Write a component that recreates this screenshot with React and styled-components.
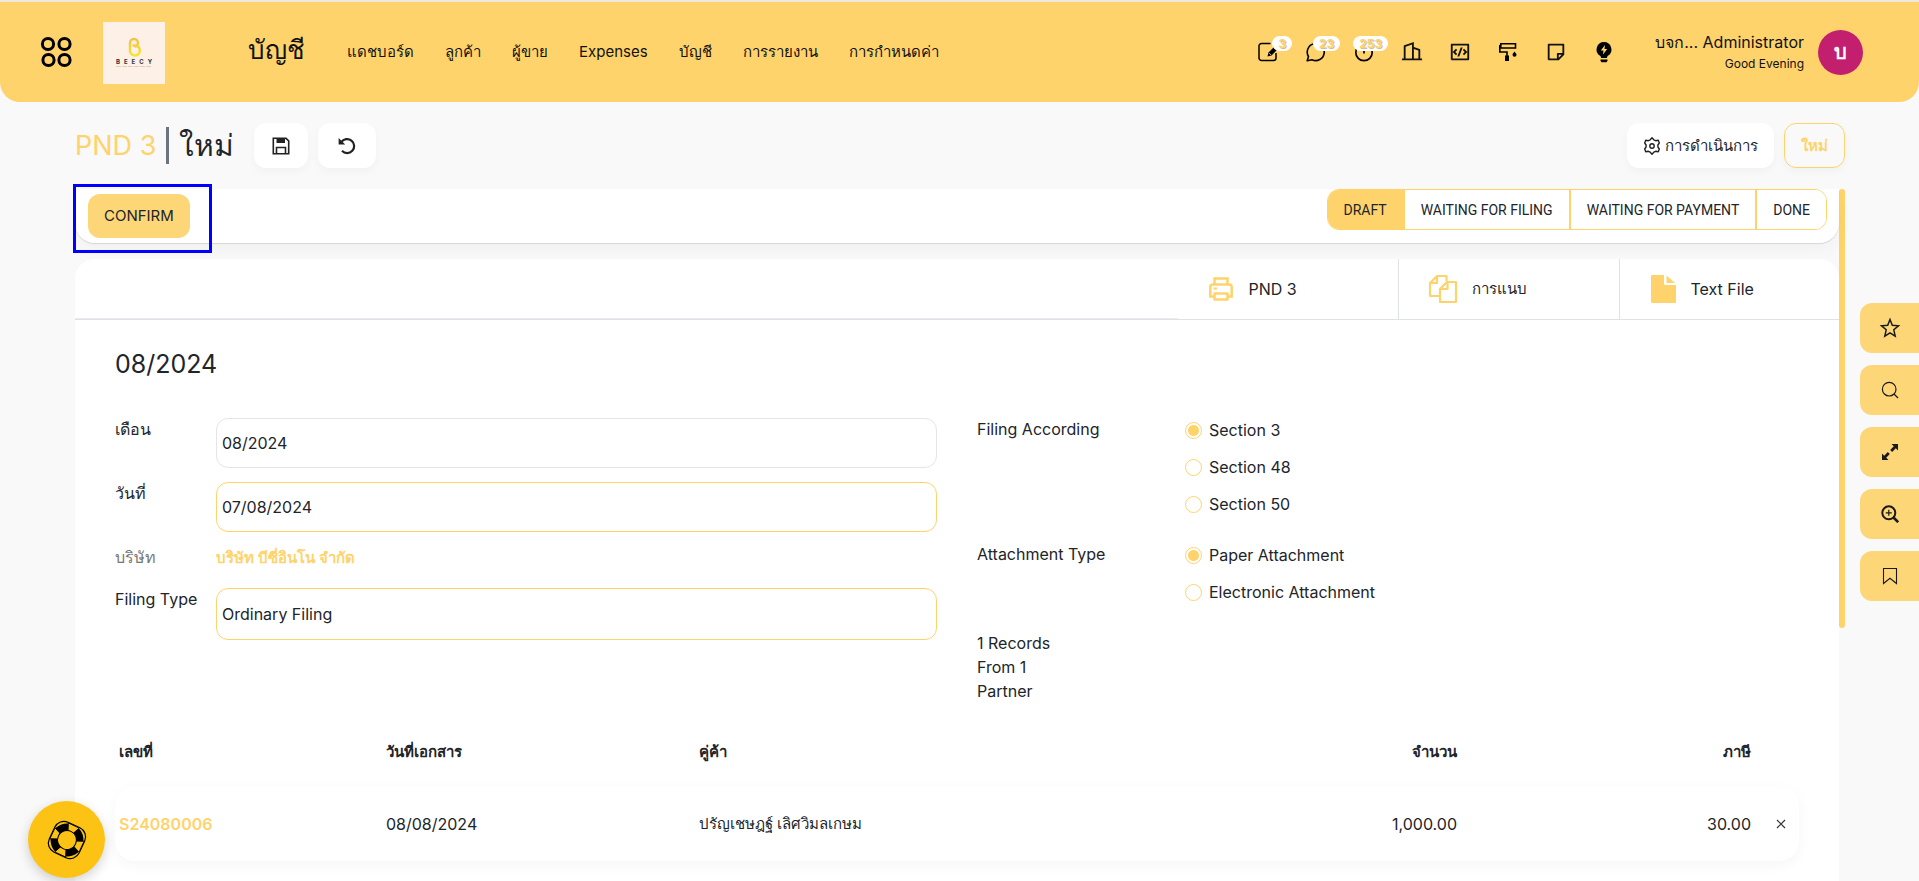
import React, { useState } from 'react'
import styled, { createGlobalStyle, css } from 'styled-components'
import { RiBuilding2Line, RiCodeBoxLine, RiStickyNoteLine } from 'react-icons/ri'

const yellow = '#ffd36b'
const softYellow = '#fdd678'

const GlobalStyle = createGlobalStyle`
  * {
    box-sizing: border-box;
  }

  body {
    margin: 0;
    background: #f9f9f9;
    color: #212529;
    font-family: Inter, 'Noto Sans', sans-serif;
    font-size: 16px;
    font-weight: 400;
    line-height: 24px;
  }

  button, input, select {
    font: inherit;
    color: inherit;
  }

  button {
    cursor: pointer;
    border: 0;
    padding: 0;
  }

  a {
    color: inherit;
    text-decoration: none;
  }
`

const Page = styled.div`
  display: flex;
  flex-direction: column;
  height: 100vh;
  overflow: hidden;
`

const Header = styled.header`
  flex: none;
  display: flex;
  align-items: center;
  height: 102px;
  padding: 0 56px 0 40px;
  border-top: 2px solid #f1e9d8;
  border-radius: 0 0 20px 20px;
  background: ${yellow};
  color: #111;
`

const AppsButton = styled.button`
  display: flex;
  background: none;
`

const Logo = styled.a`
  display: flex;
  margin-left: 31px;
  padding-top: 2px;
`

const AppName = styled.a`
  margin-left: 83px;
  padding-bottom: 4px;
  font-size: 26px;
  line-height: 40px;
`

const Nav = styled.nav`
  display: flex;
  gap: 31px;
  margin-left: 42px;
  font-size: 15px;
`

const Tray = styled.div`
  display: flex;
  align-items: center;
  gap: 20px;
  margin-left: auto;
`

const TrayButton = styled.button`
  position: relative;
  display: flex;
  justify-content: center;
  width: 28px;
  background: none;
`

const Badge = styled.span`
  position: absolute;
  top: -6px;
  right: -10px;
  padding: 0 6px;
  border-radius: 8px;
  background: white;
  color: ${yellow};
  font-size: 12px;
  font-weight: 700;
  line-height: 15px;
  text-shadow: 1px 1px 0 #c9bfa8;
`

const User = styled.div`
  display: flex;
  align-items: center;
  gap: 14px;
  margin-left: 37px;
  text-align: right;
`

const UserName = styled.div`
  font-size: 16px;
`

const Greeting = styled.div`
  font-size: 12px;
  line-height: 20px;
`

const Avatar = styled.div`
  width: 45px;
  height: 45px;
  border-radius: 50%;
  background: #c2206f;
  color: white;
  font-size: 20px;
  font-weight: 600;
  line-height: 45px;
  text-align: center;
`

const ControlPanel = styled.div`
  flex: none;
  display: flex;
  align-items: center;
  gap: 10px;
  margin: 21px 74px 21px 75px;
`

const Breadcrumb = styled.h1`
  display: flex;
  align-items: center;
  gap: 10px;
  margin: 0 10px 0 0;
  font-size: 27px;
  font-weight: 400;
  line-height: 37px;

  a{
    color: ${yellow};
  }

  span{
    padding-left: 10px;
    border-left: 3px solid #6c757d;
    font-size: 30px;
  }
`

const ToolButton = styled.button`
  display: flex;
  align-items: center;
  justify-content: center;
  gap: 4px;
  height: 45px;
  padding: 0 ${props => props.$pad || '16px'};
  border-radius: 12px;
  background: white;
  box-shadow: 0 4px 8px rgba(0, 0, 0, 0.03);
  font-size: 15px;

  ${props => props.$outline && css`
    border: 1px solid ${yellow};
    background: transparent;
    color: ${yellow};
    font-weight: 600;
  `}
`

const Spacer = styled.div`
  flex: 1;
`

const Scroller = styled.div`
  flex: 1;
  display: flex;
  min-height: 0;
  margin: 0 74px 0 75px;
`

const Content = styled.main`
  flex: 1;
  min-width: 0;
`

const ScrollTrack = styled.div`
  width: 6px;
`

const ScrollThumb = styled.div`
  height: calc(64% - 4px);
  border-radius: 3px;
  background: ${yellow};
`

const StatusRow = styled.div`
  position: relative;
  display: flex;
  justify-content: space-between;
  align-items: flex-start;
  height: 54px;
  padding: 0 12px 0 13px;
  border-radius: 0 0 20px 20px;
  background: white;
  box-shadow: 0 1px 1px rgba(0, 0, 0, 0.12), 0 8px 16px rgba(0, 0, 0, 0.03);
`

const ConfirmButton = styled.button`
  height: 44px;
  margin-top: 5px;
  padding: 0 16px;
  border-radius: 12px;
  background: ${softYellow};
  font-size: 15px;
`

const Highlight = styled.div`
  position: absolute;
  top: -5px;
  left: -2px;
  width: 139px;
  height: 69px;
  border: 3px solid #0000ff;
  pointer-events: none;
`

const StatusBar = styled.div`
  display: flex;
  overflow: hidden;
  border: 1px solid ${yellow};
  border-radius: 12px;
`

const Status = styled.button`
  height: 39px;
  padding: 0 16px;
  border-left: 2px solid ${yellow};
  background: ${props => props.$active ? yellow : 'white'};
  font-family: Roboto, sans-serif;
  font-size: 14px;

  &:first-child{
    border-left: 0;
  }
`

const Sheet = styled.section`
  margin-top: 16px;
  padding-bottom: 40px;
  border-radius: 20px 20px 0 0;
  background: white;
`

const ButtonBox = styled.div`
  display: grid;
  grid-template-columns: 5fr 1fr 1fr 1fr;
  height: 61px;
  border-bottom: 1px solid #dee2e6;

  &:before{
    content: '';
    border-bottom: 1px solid #e9ebee;
  }
`

const StatButton = styled.button`
  display: flex;
  align-items: center;
  gap: 14px;
  padding-left: 29px;
  border-left: ${props => props.$first ? '0' : '1px solid #dee2e6'};
  background: none;
  font-size: ${props => props.$thai ? '15px' : '16px'};
`

const SheetBody = styled.div`
  padding: 0 40px;
`

const SheetTitle = styled.h2`
  margin: 29px 0 39px;
  font-size: 25px;
  font-weight: 400;
  line-height: 30px;
`

const Groups = styled.div`
  display: grid;
  grid-template-columns: 1fr 1fr;
  gap: 40px;
`

const FieldRow = styled.div`
  display: grid;
  grid-template-columns: 101px 1fr;
  align-items: start;
  min-height: 28px;
  margin-bottom: 14px;
`

const Label = styled.label`
  color: ${props => props.$muted ? '#777' : 'inherit'};
  line-height: 22px;
  white-space: nowrap;
`

const boxed = css`
  width: 100%;
  height: 50px;
  padding: 0 5px;
  border: 1px solid ${props => props.$plain ? '#e4e4ec' : yellow};
  border-radius: 12px;
  background: white;
  outline: 0;
`

const Field = styled.input`
  ${boxed}
`

const Select = styled.select`
  ${boxed}
  height: 52px;
  appearance: none;
`

const CompanyLink = styled.a`
  color: ${yellow};
  font-size: 15px;
  font-weight: 600;
`

const RadioField = styled.fieldset`
  display: grid;
  grid-template-columns: 208px 1fr;
  margin: 0 0 27px;
  padding: 0;
  border: 0;
`

const Legend = styled.legend`
  float: left;
  padding: 0;
  line-height: 22px;
`

const Options = styled.div`
  display: flex;
  flex-direction: column;
  gap: 13px;
`

const Option = styled.label`
  display: flex;
  align-items: center;
  gap: 7px;
`

const Radio = styled.input`
  appearance: none;
  width: 17px;
  height: 17px;
  margin: 0;
  border: 1px solid ${yellow};
  border-radius: 50%;
  background: white;

  &:checked{
    background: radial-gradient(circle, ${yellow} 5px, white 6px);
  }
`

const Summary = styled.p`
  width: 85px;
  margin: 0;
`

const Table = styled.table`
  width: 100%;
  margin-top: 14px;
  border-collapse: separate;
  border-spacing: 0;
  table-layout: fixed;

  th, td{
    padding: 0 4px;
    text-align: left;
  }

  th{
    height: 69px;
    font-size: 15px;
    font-weight: 600;
  }

  td{
    height: 75px;
  }

  td.thai{
    font-size: 15px;
  }

  tbody tr{
    border-radius: 20px;
    box-shadow: 0 4px 14px rgba(0, 0, 0, 0.04);
  }

  th.number, td.number{
    text-align: right;
  }
`

const RecordLink = styled.a`
  color: ${yellow};
  font-weight: 600;
`

const RemoveButton = styled.button`
  display: flex;
  margin-left: 17px;
  background: none;
`

const SideButtons = styled.div`
  position: fixed;
  top: 303px;
  right: 0;
  display: flex;
  flex-direction: column;
  gap: 12px;
`

const SideButton = styled.button`
  display: flex;
  align-items: center;
  justify-content: center;
  width: 59px;
  height: 50px;
  border-radius: 12px 0 0 12px;
  background: ${softYellow};
`

const SupportButton = styled.button`
  position: fixed;
  left: 28px;
  bottom: 3px;
  display: flex;
  align-items: center;
  justify-content: center;
  width: 77px;
  height: 77px;
  border-radius: 50%;
  background: #fcc314;
  box-shadow: 0 4px 12px rgba(0, 0, 0, 0.18);
`

const AppsIcon = () => (
  <svg width="32" height="32" viewBox="0 0 32 32" fill="none" stroke="#000" strokeWidth="3">
    <circle cx="8" cy="8" r="5.6" />
    <circle cx="24.5" cy="8" r="5.6" />
    <circle cx="8.5" cy="24" r="5.6" />
    <circle cx="24.5" cy="24" r="5.6" />
  </svg>
)

const LogoIcon = () => (
  <svg width="62" height="62" viewBox="0 0 62 62">
    <defs>
      <linearGradient id="bee" x1="0" y1="0" x2="0" y2="1">
        <stop offset="0" stopColor="#f2c14b" />
        <stop offset="1" stopColor="#f5e52f" />
      </linearGradient>
    </defs>
    <rect width="62" height="62" fill="#fdf1e7" />
    <path d="M27 23.500v-2.500a4 4 0 0 1 8 0c0 1.600-.8 2.800-2.500 3.500M27 21.500v6a5 5 0 1 0 5-4h-1.500" fill="none" stroke="url(#bee)" strokeWidth="2.500" strokeLinecap="round" />
    <text x="33" y="42" fontSize="6" fontWeight="700" fontFamily="Inter" letterSpacing="4" fill="#333" textAnchor="middle">BEECY</text>
    <path d="M13 44.500h36" stroke="#e0cdbb" strokeWidth="1.200" strokeDasharray="5 1" />
  </svg>
)

const EditIcon = () => (
  <svg width="20" height="20" viewBox="0 0 20 20" fill="none" stroke="#000" strokeWidth="1.500">
    <path d="M12.500 1.500h-9A2.500 2.500 0 0 0 1 4v12a2.500 2.500 0 0 0 2.500 2.500h12A2.500 2.500 0 0 0 18 16v-5" />
    <path d="M9.500 14.500l1-4 7-7 3 3-7 7z" fill="#000" stroke="none" />
    <path d="M11.300 11.200l1.700 1.700" stroke={yellow} strokeWidth="1" />
  </svg>
)

const ChatIcon = () => (
  <svg width="20" height="20" viewBox="0 0 20 20" fill="none" stroke="#000" strokeWidth="1.600">
    <path d="M1.200 18.800L2.500 14.500A8.500 8.500 0 1 1 6 17.700z" strokeLinejoin="round" />
  </svg>
)

const ClockIcon = () => (
  <svg width="20" height="20" viewBox="0 0 20 20" fill="none" stroke="#000" strokeWidth="1.700">
    <circle cx="10" cy="10.500" r="8.200" />
    <path d="M10 6v5.500" />
  </svg>
)

const PaintIcon = () => (
  <svg width="20" height="20" viewBox="0 0 20 20" fill="none" stroke="#000" strokeWidth="1.600">
    <path d="M2.800 1.800h14.700v4.200H2.800z" />
    <path d="M1 3.800h2M1.800 4v6h7.200v4" />
    <path d="M7 13.500h4V19H7z" fill="#000" stroke="none" />
    <path d="M16.500 9.500c1.500 1.800 2 2.600 2 3.300a2 2 0 0 1-4 0c0-.7.500-1.500 2-3.300z" fill="#000" stroke="none" />
  </svg>
)

const BulbIcon = () => (
  <svg width="20" height="22" viewBox="0 0 20 22">
    <path d="M10 1a7.500 7.500 0 0 0-4 13.800c.6.400 1 1.200 1 2.200h6c0-1 .4-1.800 1-2.200A7.500 7.500 0 0 0 10 1z" />
    <path d="M6.500 18.500h7v1.200l-1 1.500h-5l-1-1.500z" />
    <path d="M11 4L6.800 9.500h2.700L9 13.500 13.200 8h-2.700z" fill={yellow} />
  </svg>
)

const SaveIcon = () => (
  <svg width="18" height="18" viewBox="0 0 18 18" fill="none" stroke="#222" strokeWidth="1.600">
    <path d="M1.300 1.300H14l2.700 2.600v12.800H1.300z" />
    <path d="M4.500 16.500v-6h9v6" />
    <path d="M4.500 1.500h8.500v4.500H4.500z" fill="#222" stroke="none" />
  </svg>
)

const UndoIcon = () => (
  <svg width="18" height="18" viewBox="0 0 18 18" fill="none" stroke="#222" strokeWidth="2.200">
    <path d="M3.300 5.200A7 7 0 1 1 4 13.800" />
    <path d="M.6 1v6.600h6.600z" fill="#222" stroke="none" />
  </svg>
)

const GearIcon = () => (
  <svg width="18" height="22" viewBox="0 0 18 22" fill="none" stroke="#222" strokeWidth="1.400" strokeLinejoin="round">
    <path d="M7.200 4.800L9 2.800l1.800 2 1.800.9 2.700-.4 1 2.700-1.400 2v2l1.400 2-1 2.700-2.700-.4-1.800.9-1.800 2-1.800-2-1.800-.9-2.700.4-1-2.700 1.400-2v-2L1.700 8l1-2.700 2.700.4z" />
    <circle cx="9" cy="11" r="2.200" />
  </svg>
)

const PrinterIcon = () => (
  <svg width="28" height="28" viewBox="0 0 28 28" fill="none" stroke={yellow} strokeWidth="2.500">
    <path d="M7.500 9V3.500h13V9M7.500 21.500H3.300V12a2.500 2.500 0 0 1 2.500-2.500h16.400a2.500 2.500 0 0 1 2.500 2.500v9.500h-4.200" />
    <path d="M7.500 18.500h13v6h-13z" strokeLinejoin="round" />
    <path d="M6.500 13.500h3.500" strokeWidth="2" />
  </svg>
)

const CopyIcon = () => (
  <svg width="30" height="30" viewBox="0 0 30 30" fill="none" stroke={yellow} strokeWidth="2.200" strokeLinejoin="round">
    <path d="M18.500 7V2H9L2 9v13h9.500" />
    <path d="M9 2.500V9H2.500" />
    <path d="M19 8h9v20H12V15z" />
    <path d="M19.500 8.500V15h-7" />
  </svg>
)

const FileIcon = () => (
  <svg width="28" height="28" viewBox="0 0 28 28" fill={yellow}>
    <path d="M3 0h12v8.500a1.500 1.500 0 0 0 1.500 1.500H27v17a1 1 0 0 1-1 1H3a1 1 0 0 1-1-1V1a1 1 0 0 1 1-1z" />
    <path d="M17.500 0.500l8.500 7.500h-8.500z" />
  </svg>
)

const StarIcon = () => (
  <svg width="22" height="22" viewBox="0 0 22 22" fill="none" stroke="#1a1a1a" strokeWidth="1.500">
    <path d="M11 2.500l2.300 5.800 6.200.5-4.700 4 1.400 6.400L11 15.800l-5.200 3.400 1.400-6.400-4.700-4 6.200-.5z" />
  </svg>
)

const SearchIcon = () => (
  <svg width="18" height="18" viewBox="0 0 18 18" fill="none" stroke="#1a1a1a" strokeWidth="1.200">
    <circle cx="8.200" cy="8.200" r="6.800" />
    <path d="M13 13l4 4" />
  </svg>
)

const ExpandIcon = () => (
  <svg width="18" height="18" viewBox="0 0 18 18" fill="#1a1a1a">
    <path d="M10.500 1H17v6.500l-2.200-2.200-3.600 3.600-2-2 3.600-3.600zM7.500 17H1v-6.500l2.200 2.200 3.600-3.600 2 2-3.600 3.600z" />
  </svg>
)

const ZoomIcon = () => (
  <svg width="18" height="18" viewBox="0 0 18 18" fill="none" stroke="#1a1a1a" strokeWidth="2">
    <circle cx="7.800" cy="7.800" r="6.500" />
    <path d="M12.500 12.500l4.700 4.700" strokeWidth="2.600" />
    <path d="M4.800 7.800h6M7.800 4.800v6" strokeWidth="1.200" />
  </svg>
)

const BookmarkIcon = () => (
  <svg width="16" height="18" viewBox="0 0 16 18" fill="none" stroke="#1a1a1a" strokeWidth="1.100">
    <path d="M1.500 1.500h13v15L8 11.200l-6.500 5.300z" />
  </svg>
)

const LifebuoyIcon = () => (
  <svg width="44" height="44" viewBox="-22 -22 44 44">
    <g transform="rotate(25)" stroke="#000" fill="none">
      <rect x="-16.500" y="-16.500" width="33" height="33" rx="10" strokeWidth="1.200" />
      <circle r="16.500" fill="#000" stroke="none" />
      <path d="M-6 -16L-3 -9h6l3-7zM-6 16L-3 9h6l3 7zM-16 -6L-9 -3v6l-7 3zM16 -6L9 -3v6l7 3z" fill="#fcc314" strokeWidth="0.800" />
      <circle r="9.500" fill="#fcc314" strokeWidth="1" />
    </g>
  </svg>
)

const CloseIcon = () => (
  <svg width="10" height="10" viewBox="0 0 10 10" stroke="#333" strokeWidth="1.200">
    <path d="M1 1l8 8M9 1L1 9" />
  </svg>
)

const menu = ['แดชบอร์ด', 'ลูกค้า', 'ผู้ขาย', 'Expenses', 'บัญชี', 'การรายงาน', 'การกำหนดค่า']
const statuses = ['DRAFT', 'WAITING FOR FILING', 'WAITING FOR PAYMENT', 'DONE']

const tray = [
  { name: 'Notes', icon: <EditIcon />, count: 3 },
  { name: 'Messages', icon: <ChatIcon />, count: 23 },
  { name: 'Activities', icon: <ClockIcon />, count: 253 },
  { name: 'Company', icon: <RiBuilding2Line size={22} /> },
  { name: 'Developer', icon: <RiCodeBoxLine size={22} /> },
  { name: 'Theme', icon: <PaintIcon /> },
  { name: 'Sticky notes', icon: <RiStickyNoteLine size={22} /> },
  { name: 'Dark mode', icon: <BulbIcon /> },
]

const sideButtons = [
  { name: 'Favourite', icon: <StarIcon /> },
  { name: 'Search', icon: <SearchIcon /> },
  { name: 'Full screen', icon: <ExpandIcon /> },
  { name: 'Zoom', icon: <ZoomIcon /> },
  { name: 'Bookmark', icon: <BookmarkIcon /> },
]

const rows = [
  { no: 'S24080006', date: '08/08/2024', partner: 'ปรัญเชษฎฐ์ เลิศวิมลเกษม', amount: '1,000.00', tax: '30.00' },
]

function RadioGroup({ label, name, options }) {
  const [value, setValue] = useState(options[0])
  return (
    <RadioField>
      <Legend>{label}</Legend>
      <Options>
        {options.map(option => (
          <Option key={option}>
            <Radio type="radio" name={name} checked={value === option} onChange={() => setValue(option)} />
            {option}
          </Option>
        ))}
      </Options>
    </RadioField>
  )
}

function TopBar() {
  return (
    <Header>
      <AppsButton aria-label="Apps"><AppsIcon /></AppsButton>
      <Logo href="#" aria-label="Beecy"><LogoIcon /></Logo>
      <AppName href="#">บัญชี</AppName>
      <Nav>
        {menu.map(item => (
          <a key={item} href="#">{item}</a>
        ))}
      </Nav>
      <Tray>
        {tray.map(item => (
          <TrayButton key={item.name} aria-label={item.name}>
            {item.icon}
            {item.count && <Badge>{item.count}</Badge>}
          </TrayButton>
        ))}
      </Tray>
      <User>
        <div>
          <UserName>บจก... Administrator</UserName>
          <Greeting>Good Evening</Greeting>
        </div>
        <Avatar>บ</Avatar>
      </User>
    </Header>
  )
}

function App() {
  const [month, setMonth] = useState('08/2024')
  const [date, setDate] = useState('07/08/2024')

  return (
    <Page>
      <GlobalStyle />
      <TopBar />
      <ControlPanel>
        <Breadcrumb>
          <a href="#">PND 3</a>
          <span>ใหม่</span>
        </Breadcrumb>
        <ToolButton $pad="18px" aria-label="Save"><SaveIcon /></ToolButton>
        <ToolButton $pad="20px" aria-label="Discard"><UndoIcon /></ToolButton>
        <Spacer />
        <ToolButton><GearIcon />การดำเนินการ</ToolButton>
        <ToolButton $outline>ใหม่</ToolButton>
      </ControlPanel>
      <Scroller>
        <Content>
          <StatusRow>
            <ConfirmButton>CONFIRM</ConfirmButton>
            <StatusBar>
              {statuses.map((status, index) => (
                <Status key={status} $active={index === 0}>{status}</Status>
              ))}
            </StatusBar>
            <Highlight />
          </StatusRow>
          <Sheet>
            <ButtonBox>
              <StatButton $first><PrinterIcon />PND 3</StatButton>
              <StatButton $thai><CopyIcon />การแนบ</StatButton>
              <StatButton><FileIcon />Text File</StatButton>
            </ButtonBox>
            <SheetBody>
              <SheetTitle>08/2024</SheetTitle>
              <Groups>
                <div>
                  <FieldRow>
                    <Label htmlFor="month">เดือน</Label>
                    <Field id="month" $plain value={month} onChange={e => setMonth(e.target.value)} />
                  </FieldRow>
                  <FieldRow>
                    <Label htmlFor="date">วันที่</Label>
                    <Field id="date" value={date} onChange={e => setDate(e.target.value)} />
                  </FieldRow>
                  <FieldRow>
                    <Label as="span" $muted>บริษัท</Label>
                    <CompanyLink href="#">บริษัท บีซี่อินโน จำกัด</CompanyLink>
                  </FieldRow>
                  <FieldRow>
                    <Label htmlFor="type">Filing Type</Label>
                    <Select id="type">
                      <option>Ordinary Filing</option>
                      <option>Additional Filing</option>
                    </Select>
                  </FieldRow>
                </div>
                <div>
                  <RadioGroup label="Filing According" name="section" options={['Section 3', 'Section 48', 'Section 50']} />
                  <RadioGroup label="Attachment Type" name="attachment" options={['Paper Attachment', 'Electronic Attachment']} />
                  <Summary>1 Records From 1 Partner</Summary>
                </div>
              </Groups>
              <Table>
                <colgroup>
                  <col width="267" />
                  <col width="313" />
                  <col />
                  <col width="300" />
                  <col width="294" />
                  <col width="44" />
                </colgroup>
                <thead>
                  <tr>
                    <th>เลขที่</th>
                    <th>วันที่เอกสาร</th>
                    <th>คู่ค้า</th>
                    <th className="number">จำนวน</th>
                    <th className="number">ภาษี</th>
                    <th></th>
                  </tr>
                </thead>
                <tbody>
                  {rows.map(row => (
                    <tr key={row.no}>
                      <td><RecordLink href="#">{row.no}</RecordLink></td>
                      <td>{row.date}</td>
                      <td className="thai">{row.partner}</td>
                      <td className="number">{row.amount}</td>
                      <td className="number">{row.tax}</td>
                      <td><RemoveButton aria-label="Remove"><CloseIcon /></RemoveButton></td>
                    </tr>
                  ))}
                </tbody>
              </Table>
            </SheetBody>
          </Sheet>
        </Content>
        <ScrollTrack><ScrollThumb /></ScrollTrack>
      </Scroller>
      <SideButtons>
        {sideButtons.map(button => (
          <SideButton key={button.name} aria-label={button.name}>{button.icon}</SideButton>
        ))}
      </SideButtons>
      <SupportButton aria-label="Support"><LifebuoyIcon /></SupportButton>
    </Page>
  )
}

export default App
